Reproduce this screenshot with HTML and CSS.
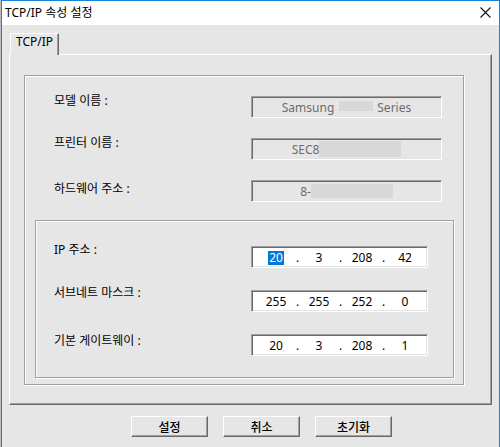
FILE: index.html
```html
<!DOCTYPE html>
<html lang="ko">
<head>
<meta charset="utf-8">
<title>TCP/IP 속성 설정</title>
<link rel="stylesheet" href="styles.css">
</head>
<body>
<div class="window">
  <div class="titlebar">
    <span class="title">TCP/IP 속성 설정</span>
    <svg class="close" width="11" height="11" viewBox="0 0 11 11"><path d="M0.5 0.5 L10.5 10.5 M10.5 0.5 L0.5 10.5" stroke="#111" stroke-width="1.1" fill="none"/></svg>
  </div>
  <div class="content">
    <div class="tab-strip"><div class="tab">TCP/IP</div></div>
    <div class="panel">
      <div class="group group-outer">
        <div class="rows rows-outer">
          <div class="row">
            <div class="label lo-a">모델 이름 :</div>
            <div class="field ro">Samsung<span class="blur b-model"></span>Series</div>
          </div>
          <div class="row">
            <div class="label lo-a">프린터 이름 :</div>
            <div class="field ro">SEC8<span class="blur b-name"></span></div>
          </div>
          <div class="row">
            <div class="label lo-b">하드웨어 주소 :</div>
            <div class="field ro">8-<span class="blur b-mac"></span></div>
          </div>
        </div>
        <div class="group group-inner">
          <div class="rows rows-inner">
            <div class="row">
              <div class="label lo-c">IP 주소 :</div>
              <div class="field ip"><span class="seg"><span class="sel">20</span></span><span class="dot">.</span><span class="seg">3</span><span class="dot">.</span><span class="seg">208</span><span class="dot">.</span><span class="seg">42</span></div>
            </div>
            <div class="row">
              <div class="label lo-d">서브네트 마스크 :</div>
              <div class="field ip"><span class="seg">255</span><span class="dot">.</span><span class="seg">255</span><span class="dot">.</span><span class="seg">252</span><span class="dot">.</span><span class="seg">0</span></div>
            </div>
            <div class="row">
              <div class="label lo-e">기본 게이트웨이 :</div>
              <div class="field ip"><span class="seg">20</span><span class="dot">.</span><span class="seg">3</span><span class="dot">.</span><span class="seg">208</span><span class="dot">.</span><span class="seg">1</span></div>
            </div>
          </div>
        </div>
      </div>
    </div>
    <div class="buttons">
      <button class="btn">설정</button>
      <button class="btn">취소</button>
      <button class="btn">초기화</button>
    </div>
  </div>
</div>
</body>
</html>
```
FILE: styles.css
```css
html, body {
  margin: 0;
  padding: 0;
  height: 447px;
  overflow: hidden;
}
body {
  background: #b8bcc2;
  font-family: "Noto Sans", "Noto Sans CJK KR", sans-serif;
  font-size: 12px;
  color: #000;
}
.window {
  margin-left: 1px;
  width: 499px;
  height: 448px;
  box-sizing: border-box;
  border: 1px solid #1883d7;
  border-bottom: none;
  background: #e6e6e6;
}
.titlebar {
  height: 24px;
  background: #fff;
  display: flex;
  align-items: center;
  justify-content: space-between;
  padding: 0 8px 0 3px;
}
.title {
  line-height: 24px;
  padding-bottom: 1px;
}
.close {
  display: block;
  margin-top: -1px;
}
.content {
  padding: 8px 0 0 7px;
}
.tab-strip {
  display: flex;
  padding-left: 1px;
}
.tab {
  position: relative;
  z-index: 1;
  width: 49px;
  height: 22px;
  margin-bottom: -1px;
  box-sizing: border-box;
  border-top: 1px solid #fff;
  border-left: 1px solid #fff;
  border-right: 1px solid #696969;
  box-shadow: inset -1px 0 0 #a0a0a0;
  background: #e6e6e6;
  padding-left: 5px;
  line-height: 16px;
}
.panel {
  width: 483px;
  height: 351px;
  box-sizing: border-box;
  border-top: 1px solid #fff;
  border-left: 1px solid #fff;
  border-right: 1px solid #696969;
  border-bottom: 1px solid #696969;
  box-shadow: inset -1px -1px 0 #a0a0a0;
  padding: 20px 0 0 14px;
}
.group {
  box-sizing: border-box;
  border: 1px solid #a0a0a0;
  box-shadow: inset 1px 1px 0 #fff, 1px 1px 0 #fff;
}
.group-outer {
  width: 440px;
  height: 310px;
  padding-top: 20px;
}
.rows {
  display: flex;
  flex-direction: column;
}
.rows-outer {
  padding-left: 29px;
  gap: 20px;
}
.group-inner {
  width: 419px;
  height: 158px;
  margin: 18px 0 0 10px;
  padding-top: 25px;
}
.rows-inner {
  padding-left: 18px;
  gap: 22px;
}
.row {
  display: grid;
  grid-template-columns: 197px auto;
  align-items: start;
  height: 22px;
}
.label {
  line-height: 16px;
  color: #000;
  white-space: nowrap;
}
.lo-a { margin-top: -3px; }
.lo-b { margin-top: 1px; }
.lo-c { margin-top: -4px; }
.lo-d { margin-top: -5px; }
.lo-e { margin-top: -1px; }
.field {
  height: 22px;
  box-sizing: border-box;
  border-top: 1px solid #a0a0a0;
  border-left: 1px solid #a0a0a0;
  border-right: 1px solid #fff;
  border-bottom: 1px solid #fff;
  box-shadow: inset 1px 1px 0 #696969, inset -1px -1px 0 #e3e3e3;
  display: flex;
  align-items: center;
}
.ro {
  width: 191px;
  justify-content: center;
  color: #6d6d6d;
  background: #e6e6e6;
}
.blur {
  display: inline-block;
  background: #d8d8d8;
}
.b-model {
  width: 34px;
  height: 10px;
  margin: 0 4px 2px 5px;
}
.b-name {
  width: 82px;
  height: 16px;
}
.b-mac {
  width: 82px;
  height: 14px;
}
.ip {
  width: 177px;
  background: #fff;
  padding-left: 6px;
}
.seg {
  width: 36px;
  text-align: center;
  flex: none;
}
.dot {
  width: 7px;
  text-align: center;
  flex: none;
}
.sel {
  background: #0078d7;
  color: #fff;
  display: inline-block;
  line-height: 14px;
  padding: 0 1px;
}
.buttons {
  display: flex;
  gap: 15px;
  padding-left: 122px;
  margin-top: 11px;
}
.btn {
  width: 77px;
  height: 21px;
  box-sizing: border-box;
  margin: 0;
  padding: 0;
  font: inherit;
  font-weight: 500;
  color: #000;
  background: #e6e6e6;
  border-top: 1px solid #fff;
  border-left: 1px solid #fff;
  border-right: 1px solid #696969;
  border-bottom: 1px solid #696969;
  box-shadow: inset -1px -1px 0 #a0a0a0;
}
```
